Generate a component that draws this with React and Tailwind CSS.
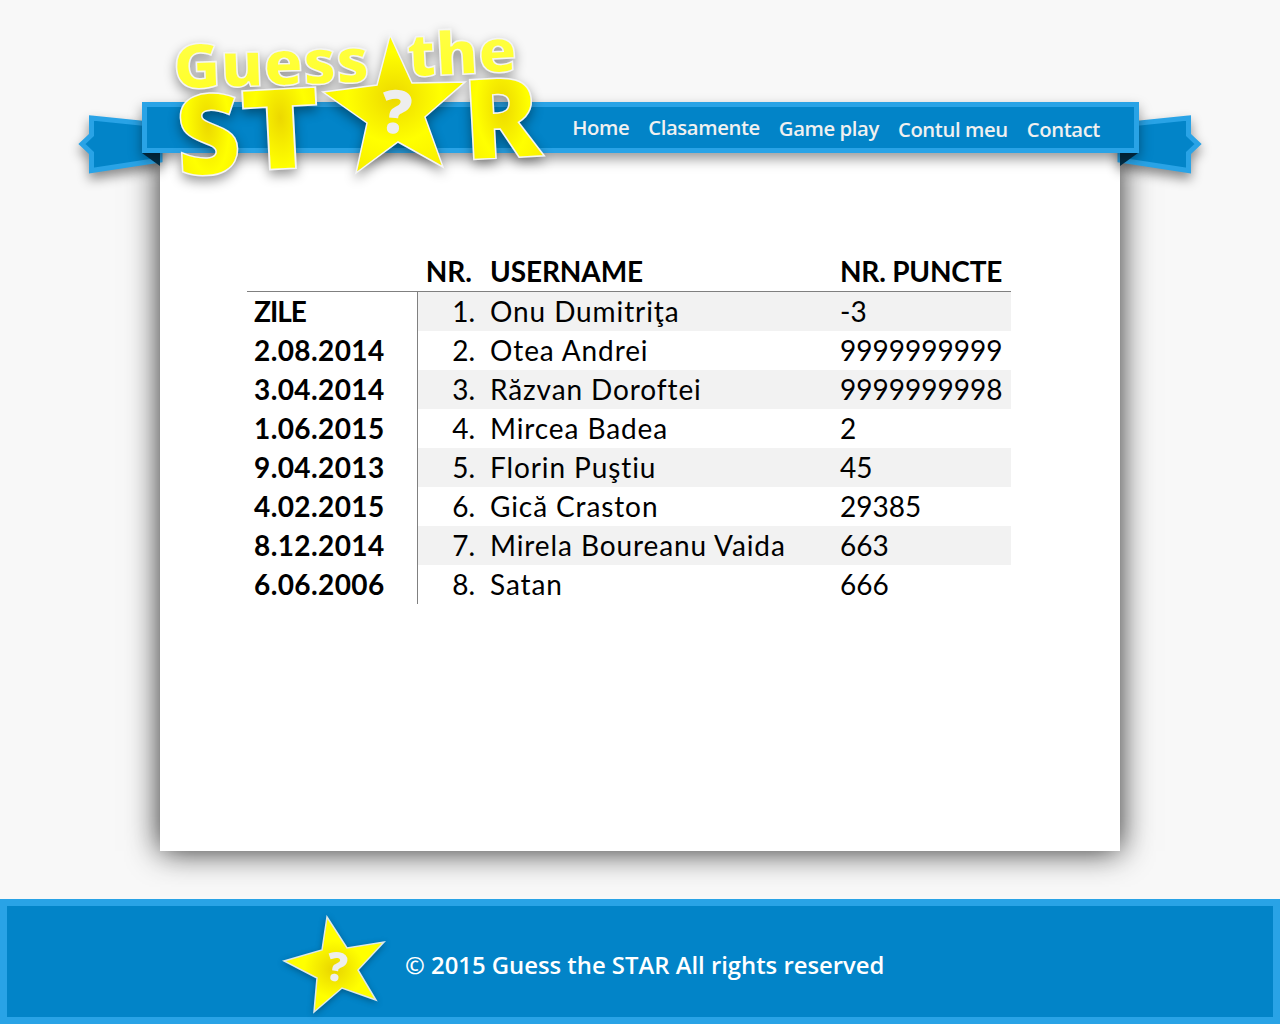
const rows = [
  ["ZILE", "1.", "Onu Dumitriţa", "-3"],
  ["2.08.2014", "2.", "Otea Andrei", "9999999999"],
  ["3.04.2014", "3.", "Răzvan Doroftei", "9999999998"],
  ["1.06.2015", "4.", "Mircea Badea", "2"],
  ["9.04.2013", "5.", "Florin Puştiu", "45"],
  ["4.02.2015", "6.", "Gică Craston", "29385"],
  ["8.12.2014", "7.", "Mirela Boureanu Vaida", "663"],
  ["6.06.2006", "8.", "Satan", "666"],
];

const navLinks = [
  ["Home", "mt-[0px]"],
  ["Clasamente", "mt-[0px]"],
  ["Game play", "mt-[2px]"],
  ["Contul meu", "mt-[4px]"],
  ["Contact", "mt-[4px]"],
];

const Tail = ({ flip }) => (
  <svg
    className={`absolute top-[110px] h-[70px] w-[90px] drop-shadow-[0_6px_6px_rgba(0,0,0,0.45)] ${flip ? "right-[74px] -scale-x-100" : "left-[74px]"}`}
    viewBox="74 110 90 70"
  >
    <polygon
      points="91.5,118 160,125 160,160 91.5,170.5 91.5,153 82,144 91.5,135"
      fill="#0284c8"
      stroke="#29a3e6"
      strokeWidth="5"
    />
    <polygon points="142,153 160,153 160,166" fill="#02304a" />
  </svg>
);

const Logo = () => (
  <svg
    className="absolute left-[160px] top-[20px] z-20 h-[180px] w-[400px] overflow-visible drop-shadow-[0_5px_6px_rgba(0,0,0,0.4)]"
    viewBox="160 20 400 180"
    fontFamily="'Open Sans', sans-serif"
    fontWeight="800"
    stroke="#f4f4f4"
    strokeWidth="1.5"
  >
    <defs>
      <radialGradient id="gold" cx="50%" cy="45%" r="60%">
        <stop offset="0%" stopColor="#ecd800" />
        <stop offset="55%" stopColor="#ffff00" />
        <stop offset="100%" stopColor="#f8ee00" />
      </radialGradient>
      <linearGradient id="pale" x1="0" y1="0" x2="0" y2="1">
        <stop offset="0%" stopColor="#ffff50" />
        <stop offset="100%" stopColor="#ffff20" />
      </linearGradient>
    </defs>
    <text x="174" y="89" fontSize="62" textLength="196" lengthAdjust="spacingAndGlyphs" fill="url(#pale)" transform="rotate(-2 174 89)">
      Guess
    </text>
    <text x="408" y="77" fontSize="60" textLength="110" lengthAdjust="spacingAndGlyphs" fill="url(#pale)" transform="rotate(-3 408 77)">
      the
    </text>
    <text x="178" y="176" fontSize="112" fill="url(#gold)" transform="rotate(-3 178 176)">
      S
    </text>
    <text x="243" y="171" fontSize="112" textLength="80" lengthAdjust="spacingAndGlyphs" fill="url(#gold)" transform="rotate(-3 243 171)">
      T
    </text>
    <text x="465" y="160" fontSize="112" textLength="78" lengthAdjust="spacingAndGlyphs" fill="url(#gold)" transform="rotate(-3 465 160)">
      R
    </text>
    <polygon
      points="390,35 412,83 465,82 425,117 443,167 398,142 356,173 367,123 323,92 377,85"
      fill="url(#gold)"
    />
    <text
      x="394"
      y="133"
      fontSize="60"
      textAnchor="middle"
      fill="#eeeeee"
      stroke="none"
      transform="rotate(6 394 133)"
    >
      ?
    </text>
  </svg>
);

const FooterStar = () => (
  <svg
    className="mt-[7px] h-[100px] w-[104px] shrink-0 drop-shadow-[0_2px_3px_rgba(0,0,0,0.3)]"
    viewBox="282 915 104 100"
  >
    <defs>
      <radialGradient id="goldSmall" cx="50%" cy="55%" r="50%">
        <stop offset="0%" stopColor="#e8d400" />
        <stop offset="60%" stopColor="#ffff00" />
      </radialGradient>
    </defs>
    <polygon
      points="327,917 347,948 384,942 358,970 376,1000 342,988 314,1012 317,978 284,961 322,950"
      fill="url(#goldSmall)"
      stroke="#dfe8e8"
      strokeWidth="1.5"
    />
    <text
      x="335"
      y="981"
      fontSize="40"
      fontWeight="800"
      textAnchor="middle"
      fontFamily="'Open Sans', sans-serif"
      fill="#eeeeee"
      transform="rotate(8 335 981)"
    >
      ?
    </text>
  </svg>
);

const App = () => {
  return (
    <div className="relative flex h-[1024px] w-full flex-col overflow-hidden bg-[#f8f8f8] font-['Lato',sans-serif] text-black">
      <header className="relative z-10 pl-[142px] pr-[141px] pt-[102px]">
        <nav className="flex h-[51px] items-center justify-end gap-[19px] border-[5px] border-[#29a3e6] bg-[#0284c8] pr-[34px] font-['Open_Sans',sans-serif] text-[20.3px] font-semibold text-[#f0f0f0] shadow-[0_6px_12px_rgba(0,0,0,0.4)]">
          {navLinks.map(([label, offset]) => (
            <span key={label} className={`${offset} tracking-[-0.4px]`}>
              {label}
            </span>
          ))}
        </nav>
      </header>
      <Tail />
      <Tail flip />

      <main className="mx-[160px] h-[698px] shrink-0 bg-white pl-[87px] pt-[99px] shadow-[0_0_30px_rgba(0,0,0,0.85)]">
        <table className="w-[764px] table-fixed border-collapse text-[28px] leading-[39px]">
          <thead>
            <tr className="border-b border-[#808080] text-left font-bold">
              <th className="w-[170px] font-bold"></th>
              <th className="w-[73px] pr-[18px] text-right font-bold">NR.</th>
              <th className="w-[350px] font-bold tracking-[-0.1px]">USERNAME</th>
              <th className="font-bold tracking-[-0.2px]">NR. PUNCTE</th>
            </tr>
          </thead>
          <tbody>
            {rows.map(([zile, nr, name, points], i) => (
              <tr key={nr}>
                <td className={`border-r border-[#808080] pl-[7px] font-bold ${i === 0 ? "tracking-[-1px]" : "tracking-[0.4px]"}`}>{zile}</td>
                <td className={`pr-[15px] text-right ${i % 2 === 0 ? "bg-[#f2f2f2]" : ""}`}>{nr}</td>
                <td className={`tracking-[0.9px] ${i % 2 === 0 ? "bg-[#f2f2f2]" : ""}`}>{name}</td>
                <td className={i % 2 === 0 ? "bg-[#f2f2f2]" : ""}>{points}</td>
              </tr>
            ))}
          </tbody>
        </table>
      </main>

      <footer className="mt-[48px] flex h-[125px] shrink-0 items-center border-[7px] border-[#29a3e6] bg-[#0284c8] pl-[275px] font-['Open_Sans',sans-serif] text-[23.85px] font-semibold text-white">
        <FooterStar />
        <span className="ml-[19px] mt-[8px]">© 2015 Guess the STAR All rights reserved</span>
      </footer>
      <Logo />
    </div>
  );
};

export default App;
